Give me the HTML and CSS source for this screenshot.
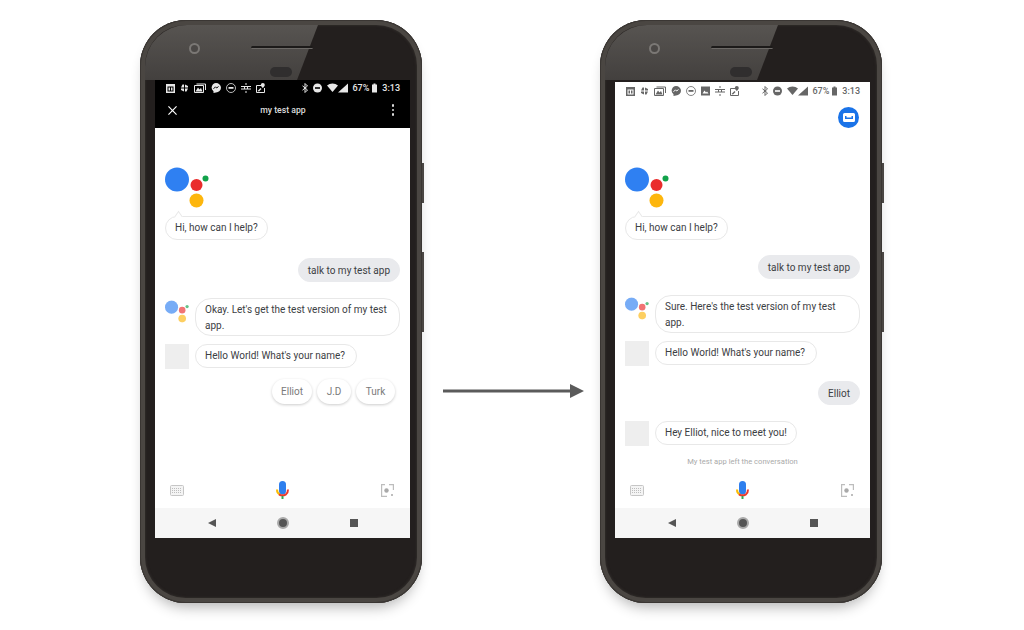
FILE: index.html
```html
<!DOCTYPE html>
<html lang="en">
<head>
    <meta charset="UTF-8">
    <meta name="viewport" content="width=device-width, initial-scale=1.0">
    <title>Test app conversation</title>
    <link rel="stylesheet" href="styles.css">
</head>
<body>

    <!-- shared icons -->
    <svg class="defs" width="0" height="0">
        <symbol id="i-cal" viewBox="0 0 9 10"><path fill="currentColor" d="M0 1h9v9H0z"/><path fill="var(--bar)" d="M1.500 3.500h6v5h-6z"/><path fill="currentColor" d="M2.500 4.500h1.500v3H2.500zM5 4.500h1.500v3H5z"/></symbol>
        <symbol id="i-pin" viewBox="0 0 9 9"><path fill="currentColor" d="M4 4 1 4l1.500-3H4zM5 4V1l3 1.500V4zM5 5h3L6.500 8H5zM4 5v3L1 6.500V5z"/></symbol>
        <symbol id="i-photo" viewBox="0 0 12 10"><path fill="none" stroke="currentColor" d="M.5 2.500h9v7h-9zM2.500 1h9v6"/><path fill="currentColor" d="m1.500 8.500 2.500-4 1.500 2 1.500-1.500 1.500 3.500z"/></symbol>
        <symbol id="i-msg" viewBox="0 0 10 10"><path fill="currentColor" d="M5 0a5 4.700 0 0 1 0 9.400L2.500 10V8.300A5 4.700 0 0 1 5 0z"/><path fill="none" stroke="var(--bar)" d="m2.500 5.800 2-2 1.200 1.200 1.800-1.500"/></symbol>
        <symbol id="i-ring" viewBox="0 0 10 10"><circle cx="5" cy="5" r="4.500" fill="none" stroke="currentColor" stroke-width=".8"/><path fill="currentColor" d="M2.500 4h5v1.800h-5z"/></symbol>
        <symbol id="i-image" viewBox="0 0 9 9"><path fill="currentColor" d="M0 0h9v9H0z"/><path fill="var(--bar)" d="m1.500 7 2-3 1.500 2 1-1 1.500 2z"/></symbol>
        <symbol id="i-hash" viewBox="0 0 10 10"><path fill="none" stroke="currentColor" d="M0 3.500h10M0 6h10M5 0v2M3.500 3.500v2.500M6.500 3.500v2.500M5 8v2"/></symbol>
        <symbol id="i-map" viewBox="0 0 9 10"><path fill="none" stroke="currentColor" d="M.5 2.500h5M.5 2.500v7h8V5"/><path fill="currentColor" d="M6.800 0a2 2 0 0 1 2 2c0 1.300-2 3-2 3s-2-1.700-2-3a2 2 0 0 1 2-2zM1.500 8l3-3 1 1-2.500 2.500z"/></symbol>
        <symbol id="i-bt" viewBox="0 0 6 10"><path fill="none" stroke="currentColor" stroke-width="1" d="m.5 2.800 5 4.200L3 9.500V.5L5.500 3 .5 7.200"/></symbol>
        <symbol id="i-dnd" viewBox="0 0 9 9"><circle cx="4.500" cy="4.500" r="4.500" fill="currentColor"/><path fill="var(--bar)" d="M2 3.700h5v1.600H2z"/></symbol>
        <symbol id="i-wifi" viewBox="0 0 11 8"><path fill="currentColor" d="M0 1.500a8.500 8.500 0 0 1 11 0L5.500 8z"/></symbol>
        <symbol id="i-signal" viewBox="0 0 10 9"><path fill="currentColor" d="M10 0v9H0z"/></symbol>
        <symbol id="i-batt" viewBox="0 0 5 9"><path fill="currentColor" d="M1.500 0h2v1H5v8H0V1h1.500z"/></symbol>
        <symbol id="i-keys" viewBox="0 0 14 11"><rect x=".5" y=".5" width="13" height="10" rx="1" fill="#f4f4f4" stroke="#c6c6c6"/><path fill="none" stroke="#bdbdbd" stroke-dasharray="1 1" d="M2 3.500h10M2 5.500h10M2 7.500h10"/></symbol>
        <symbol id="i-lens" viewBox="0 0 13 13"><path fill="none" stroke="#bdbdbd" stroke-width="1.200" d="M4 .6H.6v11.800H6M8 .6h4.400V6"/><circle cx="5.500" cy="6.500" r="2.200" fill="#a9a9a9"/><circle cx="11" cy="11" r="1" fill="#a9a9a9"/></symbol>
        <symbol id="i-mic" viewBox="0 0 13 18"><rect x="3" y="0" width="7" height="13.500" rx="3.500" fill="#2f7fee"/><path fill="none" stroke="#fbbc05" stroke-width="2" d="M1 8.500c0 2.500 1.500 4.500 3 5"/><path fill="none" stroke="#ea3a2d" stroke-width="2" d="M3 13.300c2.200 1.300 4.800 1.300 7 0 1-.8 2-2.800 2-4.800"/><path stroke="#34a853" stroke-width="2" d="M6.500 15v3"/></symbol>
        <symbol id="i-logo" viewBox="0 0 44 41"><circle cx="12" cy="12.500" r="12" fill="#2f80f2"/><circle cx="31.500" cy="18" r="6" fill="#ea2b2b"/><circle cx="40.500" cy="11.500" r="3" fill="#12a24a"/><circle cx="31.500" cy="33.500" r="7" fill="#fdb60d"/></symbol>
    </svg>

    <main class="stage">

        <!-- before -->
        <section class="phone">
            <span class="side-key side-key-a"></span>
            <span class="side-key side-key-b"></span>
            <div class="bezel-top">
                <span class="gloss"></span>
                <span class="camera"></span>
                <span class="speaker"></span>
                <span class="sensor"></span>
            </div>
            <div class="screen">
                <div class="status status-dark">
                    <div class="status-icons">
                        <svg class="ic w9"><use href="#i-cal"/></svg>
                        <svg class="ic w9"><use href="#i-pin"/></svg>
                        <svg class="ic w12"><use href="#i-photo"/></svg>
                        <svg class="ic w10"><use href="#i-msg"/></svg>
                        <svg class="ic w10"><use href="#i-ring"/></svg>
                        <svg class="ic w10"><use href="#i-hash"/></svg>
                        <svg class="ic w9"><use href="#i-map"/></svg>
                    </div>
                    <div class="status-right">
                        <svg class="ic w6"><use href="#i-bt"/></svg>
                        <svg class="ic w9 ml-5"><use href="#i-dnd"/></svg>
                        <svg class="ic w11 ml-5"><use href="#i-wifi"/></svg>
                        <svg class="ic w10"><use href="#i-signal"/></svg>
                        <span class="status-text ml-4">67%</span>
                        <svg class="ic w5 ml-3"><use href="#i-batt"/></svg>
                        <span class="status-text ml-5">3:13</span>
                    </div>
                </div>
                <div class="toolbar">
                    <svg class="close" viewBox="0 0 10 10"><path stroke="#fff" stroke-width="1.300" d="m.5.500 9 9M9.500.500l-9 9"/></svg>
                    <span class="toolbar-title">my test app</span>
                    <span class="dots"><i></i><i></i><i></i></span>
                </div>
                <div class="chat">
                    <svg class="logo"><use href="#i-logo"/></svg>
                    <div class="bubble bubble-tail mt-8">Hi, how can I help?</div>
                    <div class="bubble bubble-user mt-18">talk to my test app</div>
                    <div class="row mt-16">
                        <svg class="logo-small" viewBox="0 0 44 41"><use href="#i-logo"/></svg>
                        <div class="bubble bubble-wide">Okay. Let's get the test version of my test<br>app.</div>
                    </div>
                    <div class="row mt-8">
                        <span class="avatar"></span>
                        <div class="bubble bubble-long">Hello World! What's your name?</div>
                    </div>
                    <div class="chips mt-10">
                        <span class="chip chip-a">Elliot</span>
                        <span class="chip chip-b">J.D</span>
                        <span class="chip chip-c">Turk</span>
                    </div>
                </div>
                <div class="inputbar">
                    <svg class="keys"><use href="#i-keys"/></svg>
                    <svg class="mic"><use href="#i-mic"/></svg>
                    <svg class="lens"><use href="#i-lens"/></svg>
                </div>
                <div class="navbar">
                    <span class="nav-back"></span>
                    <span class="nav-home"></span>
                    <span class="nav-recent"></span>
                </div>
            </div>
        </section>

        <svg class="arrow" viewBox="0 0 141 14"><path fill="#5b5b5b" d="M0 5.500h127V0l14 7-14 7V8.500H0z"/></svg>

        <!-- after -->
        <section class="phone">
            <span class="side-key side-key-a"></span>
            <span class="side-key side-key-b"></span>
            <div class="bezel-top">
                <span class="gloss"></span>
                <span class="camera"></span>
                <span class="speaker"></span>
                <span class="sensor"></span>
            </div>
            <div class="screen screen-light">
                <div class="status status-light">
                    <div class="status-icons">
                        <svg class="ic w9"><use href="#i-cal"/></svg>
                        <svg class="ic w9"><use href="#i-pin"/></svg>
                        <svg class="ic w12"><use href="#i-photo"/></svg>
                        <svg class="ic w10"><use href="#i-msg"/></svg>
                        <svg class="ic w10"><use href="#i-ring"/></svg>
                        <svg class="ic w9"><use href="#i-image"/></svg>
                        <svg class="ic w10"><use href="#i-hash"/></svg>
                        <svg class="ic w9"><use href="#i-map"/></svg>
                    </div>
                    <div class="status-right">
                        <svg class="ic w6"><use href="#i-bt"/></svg>
                        <svg class="ic w9 ml-5"><use href="#i-dnd"/></svg>
                        <svg class="ic w11 ml-5"><use href="#i-wifi"/></svg>
                        <svg class="ic w10"><use href="#i-signal"/></svg>
                        <span class="status-text ml-4">67%</span>
                        <svg class="ic w5 ml-3"><use href="#i-batt"/></svg>
                        <span class="status-text ml-5">3:13</span>
                    </div>
                </div>
                <div class="topbar">
                    <span class="app-badge">
                        <svg viewBox="0 0 12 9"><path fill="#fff" d="M1.500 0h9A1.500 1.500 0 0 1 12 1.500v6A1.500 1.500 0 0 1 10.500 9h-9A1.500 1.500 0 0 1 0 7.500v-6A1.500 1.500 0 0 1 1.500 0z"/><path fill="#1a73e8" d="M2 3h1.500v1.500h5V3H10v3H2z"/></svg>
                    </span>
                </div>
                <div class="chat">
                    <svg class="logo"><use href="#i-logo"/></svg>
                    <div class="bubble bubble-tail mt-8">Hi, how can I help?</div>
                    <div class="bubble bubble-user mt-15">talk to my test app</div>
                    <div class="row mt-16">
                        <svg class="logo-small" viewBox="0 0 44 41"><use href="#i-logo"/></svg>
                        <div class="bubble bubble-wide">Sure. Here's the test version of my test<br>app.</div>
                    </div>
                    <div class="row mt-8">
                        <span class="avatar"></span>
                        <div class="bubble bubble-long">Hello World! What's your name?</div>
                    </div>
                    <div class="bubble bubble-user mt-15">Elliot</div>
                    <div class="row mt-16">
                        <span class="avatar"></span>
                        <div class="bubble">Hey Elliot, nice to meet you!</div>
                    </div>
                    <p class="left-note">My test app left the conversation</p>
                </div>
                <div class="inputbar">
                    <svg class="keys"><use href="#i-keys"/></svg>
                    <svg class="mic"><use href="#i-mic"/></svg>
                    <svg class="lens"><use href="#i-lens"/></svg>
                </div>
                <div class="navbar">
                    <span class="nav-back"></span>
                    <span class="nav-home"></span>
                    <span class="nav-recent"></span>
                </div>
            </div>
        </section>

    </main>

</body>
</html>
```

FILE: styles.css
```css
body {
    margin: 0;
    background: #fff;
    font-family: Roboto, "Liberation Sans", sans-serif;
    color: #3c4043;
    overflow: hidden;
}
.defs {
    position: absolute;
}
.stage {
    display: flex;
    align-items: flex-start;
    height: 630px;
    box-sizing: border-box;
    padding: 20px 0 0 140px;
}

/* phone body */
.phone {
    position: relative;
    flex: none;
    display: flex;
    flex-direction: column;
    box-sizing: border-box;
    width: 282px;
    height: 583px;
    padding: 0 12px 65px 15px;
    background: #231f1e;
    border-radius: 46px;
    box-shadow: inset 0 0 0 1px #3a3633, inset 0 0 0 5px #4a4642, inset 0 0 2px 6px #2e2a28, 0 9px 14px -5px rgba(0, 0, 0, .3);
}
.side-key {
    position: absolute;
    right: -2px;
    width: 2px;
    background: #4a4643;
}
.side-key-a {
    top: 143px;
    height: 40px;
}
.side-key-b {
    top: 232px;
    height: 80px;
}
.bezel-top {
    flex: none;
    height: 60px;
}
.gloss {
    position: absolute;
    top: 5px;
    left: 5px;
    width: 173px;
    height: 55px;
    border-top-left-radius: 42px;
    background: linear-gradient(to bottom, #575451, #43403e);
    clip-path: polygon(0 0, 100% 0, 152px 100%, 0 100%);
}
.camera {
    position: absolute;
    top: 23px;
    left: 49px;
    box-sizing: border-box;
    width: 11px;
    height: 11px;
    border: 2.5px solid #7b7875;
    border-radius: 50%;
    background: #4b4846;
}
.speaker {
    position: absolute;
    top: 26px;
    left: 111px;
    width: 62px;
    height: 2px;
    background: #1c1a19;
    border-bottom: 1px solid #6c6966;
    border-radius: 2px;
}
.sensor {
    position: absolute;
    top: 47px;
    left: 130px;
    width: 22px;
    height: 10px;
    border-radius: 5px;
    background: #302e2e;
}

/* screen */
.screen {
    flex: 1;
    display: flex;
    flex-direction: column;
    min-height: 0;
    background: #fff;
}
.screen-light {
    margin-top: 2px;
}
.status {
    --bar: #000;
    flex: none;
    display: flex;
    justify-content: space-between;
    align-items: center;
    box-sizing: border-box;
    height: 16px;
    padding: 0 10px 1px 11px;
    background: #000;
    color: #e8e8e8;
}
.status-light {
    --bar: #fff;
    height: 14px;
    padding: 3px 10px 0 11px;
    background: #fff;
    color: #666;
}
.status-icons {
    display: flex;
    align-items: center;
    gap: 5px;
}
.status-right {
    display: flex;
    align-items: center;
}
.status-text {
    font-size: 9px;
    font-weight: 500;
}
.ic {
    height: 10px;
}
.w5 { width: 5px; }
.w6 { width: 6px; }
.w9 { width: 9px; }
.w10 { width: 10px; }
.w11 { width: 11px; }
.w12 { width: 12px; }
.ml-3 { margin-left: 3px; }
.ml-4 { margin-left: 4px; }
.ml-5 { margin-left: 5px; }

.toolbar {
    flex: none;
    display: grid;
    grid-template-columns: 1fr auto 1fr;
    align-items: center;
    height: 32px;
    padding: 0 16px 4px 17px;
    box-sizing: border-box;
    background: #000;
}
.close {
    width: 9px;
    height: 9px;
    margin-left: -4px;
}
.toolbar-title {
    font-size: 8.7px;
    font-weight: 500;
    color: #ddd;
}
.dots {
    justify-self: end;
    display: flex;
    flex-direction: column;
    gap: 2px;
}
.dots i {
    width: 2.5px;
    height: 2.5px;
    background: #ddd;
    border-radius: 50%;
}
.topbar {
    flex: none;
    display: flex;
    justify-content: flex-end;
    align-items: center;
    box-sizing: border-box;
    height: 32px;
    padding: 0 11px 0 0;
}
.app-badge {
    display: flex;
    align-items: center;
    justify-content: center;
    width: 21px;
    height: 21px;
    margin-top: 10px;
    border-radius: 50%;
    background: #1a73e8;
}
.app-badge svg {
    width: 12px;
    height: 9px;
}

/* chat */
.chat {
    flex: 1;
    display: flex;
    flex-direction: column;
    align-items: flex-start;
    min-height: 0;
    padding: 39px 10px 0;
}
.logo {
    flex: none;
    width: 44px;
    height: 41px;
}
.logo-small {
    flex: none;
    width: 24px;
    height: 23px;
    margin-top: 2px;
    opacity: .65;
}
.bubble {
    position: relative;
    box-sizing: border-box;
    padding: 3px 9px;
    border: 1px solid #e8e8e8;
    border-radius: 13px;
    background: #fff;
    font-size: 10px;
    line-height: 16px;
    white-space: nowrap;
}
.bubble-wide {
    flex: 1;
    min-width: 0;
    padding-top: 3px;
    padding-bottom: 1px;
    border-radius: 16px;
}
.bubble-long {
    padding-right: 11px;
}
.bubble-tail::before {
    content: "";
    position: absolute;
    top: -4px;
    left: 9px;
    width: 6px;
    height: 6px;
    background: #fff;
    border-top: 1px solid #e8e8e8;
    border-left: 1px solid #e8e8e8;
    transform: rotate(45deg) skew(10deg, 10deg);
}
.bubble-user {
    align-self: flex-end;
    padding-top: 4px;
    padding-bottom: 2px;
    border-color: #e9eaed;
    background: #e9eaed;
}
.row {
    align-self: stretch;
    display: flex;
    align-items: flex-start;
    gap: 6px;
}
.avatar {
    flex: none;
    width: 24px;
    height: 25px;
    background: #eeeeee;
}
.chips {
    align-self: stretch;
    display: flex;
    justify-content: flex-end;
    gap: 5px;
    padding-right: 5px;
}
.chip {
    display: flex;
    align-items: center;
    justify-content: center;
    height: 25px;
    border-radius: 13px;
    background: #fff;
    box-shadow: 0 1px 3px rgba(0, 0, 0, .2);
    font-size: 10px;
    color: #7a7a7a;
}
.chip-a { width: 40px; }
.chip-b { width: 34px; }
.chip-c { width: 39px; }
.left-note {
    align-self: center;
    margin: 10px 0 0;
    font-size: 7.6px;
    line-height: 12px;
    color: #aaa;
}
.mt-8 { margin-top: 8px; }
.mt-10 { margin-top: 10px; }
.mt-15 { margin-top: 15px; }
.mt-16 { margin-top: 16px; }
.mt-18 { margin-top: 18px; }

/* bottom bars */
.inputbar {
    flex: none;
    display: flex;
    justify-content: space-between;
    align-items: center;
    box-sizing: border-box;
    height: 40px;
    padding: 4px 16px 0 15px;
}
.keys {
    width: 14px;
    height: 11px;
}
.mic {
    width: 13px;
    height: 18px;
}
.lens {
    width: 13px;
    height: 13px;
}
.navbar {
    flex: none;
    display: flex;
    justify-content: center;
    align-items: center;
    gap: 61px;
    height: 30px;
    background: #f6f6f6;
}
.nav-back {
    width: 0;
    height: 0;
    border-top: 4px solid transparent;
    border-bottom: 4px solid transparent;
    border-right: 8px solid #555;
}
.nav-home {
    box-sizing: border-box;
    width: 12px;
    height: 12px;
    border: 2px solid #aaa;
    border-radius: 50%;
    background: #555;
}
.nav-recent {
    width: 8px;
    height: 8px;
    background: #555;
}

.arrow {
    flex: none;
    width: 141px;
    height: 14px;
    margin: 364px 16px 0 21px;
}
```
